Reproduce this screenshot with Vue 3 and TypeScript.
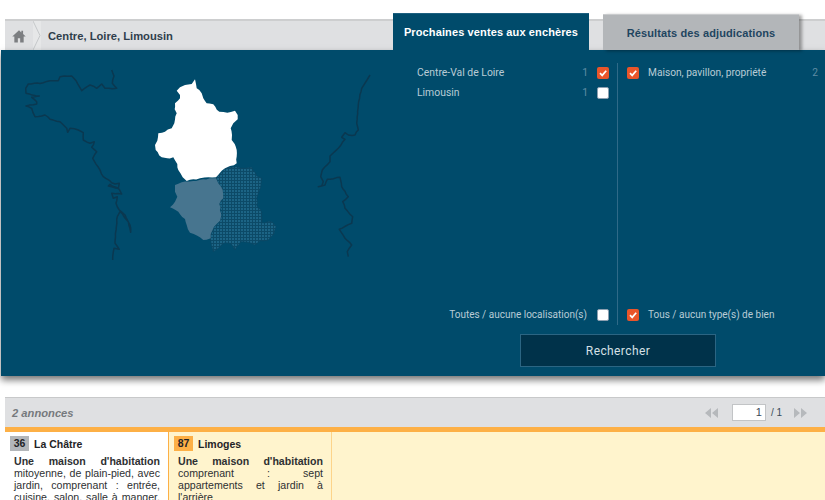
<script setup lang="ts">
const rough = (pts: number[][], amp: number): number[][] => {
  const out: number[][] = []
  let seed = 7
  const rnd = () => {
    seed = (seed * 9301 + 49297) % 233280
    return seed / 233280 - 0.5
  }
  pts.forEach((p, i) => {
    const n = pts[i + 1]
    out.push(p)
    if (!n) return
    const steps = Math.floor(Math.hypot(n[0] - p[0], n[1] - p[1]) / 9)
    for (let k = 1; k < steps; k++) {
      out.push([
        p[0] + ((n[0] - p[0]) * k) / steps + rnd() * amp,
        p[1] + ((n[1] - p[1]) * k) / steps + rnd() * amp,
      ])
    }
  })
  return out
}
const zoom = (pts: number[][], ox: number, oy: number, amp = 4): string =>
  rough(pts, amp).map((p, i) => `${i ? 'L' : 'M'}${(ox + p[0] / 3).toFixed(1)} ${(oy + p[1] / 3).toFixed(1)}`).join(' ')

const centre = zoom([[165,28],[168,42],[170,55],[178,60],[185,70],[190,85],[200,100],[220,103],[238,125],[262,128],[285,122],[293,135],[293,148],[280,160],[272,175],[276,195],[275,210],[284,222],[290,240],[290,280],[270,288],[255,295],[240,308],[228,322],[205,322],[180,325],[160,328],[140,333],[128,322],[115,300],[112,282],[100,262],[82,265],[65,262],[47,240],[45,225],[52,212],[55,190],[75,185],[95,175],[103,160],[110,130],[104,118],[105,100],[120,85],[120,75],[110,62],[120,52],[135,45],[155,42]], 140, 70) + ' Z'
const limousinLeft = zoom([[105,345],[125,337],[160,333],[190,328],[228,325],[235,340],[248,360],[250,385],[238,402],[243,430],[240,452],[222,470],[212,492],[212,505],[190,510],[172,497],[150,488],[140,465],[135,447],[115,425],[90,412],[105,395],[112,380],[105,365]], 140, 70) + ' Z'
const limousinRight = zoom([[228,322],[245,308],[255,295],[290,290],[315,295],[335,292],[350,318],[365,325],[362,350],[352,378],[350,405],[365,428],[365,458],[395,455],[408,470],[402,492],[385,510],[360,512],[345,525],[325,517],[302,515],[285,540],[272,520],[255,518],[220,545],[210,505],[222,470],[240,452],[243,430],[238,402],[250,385],[248,360],[235,340]], 140, 70) + ' Z'
const westCoast = zoom([[335,30],[342,48],[337,70],[350,85],[315,85],[305,72],[290,85],[270,75],[245,92],[228,62],[215,48],[180,50],[175,62],[150,62],[130,68],[85,72],[77,85],[78,100],[118,108],[95,112],[110,125],[110,132],[78,138],[95,145],[105,170],[125,168],[135,165],[150,178],[180,185],[200,205],[203,217],[210,205],[235,210],[250,218],[250,240],[270,250],[283,245],[275,262],[290,275],[278,295],[300,330],[310,350],[345,372],[358,370],[355,385],[325,378],[330,373],[358,388],[365,402],[335,400],[340,415],[352,410],[348,430],[358,450],[375,465],[390,495],[392,517],[385,485],[360,455],[352,470],[345,550],[358,568],[342,565],[338,600]], 0, 60, 3)
const eastCoast = 'M370 75 L367 80 ' + zoom([[215,25],[205,75],[200,130],[205,150],[195,165],[175,165],[165,158],[155,172],[165,178],[145,205],[120,228],[120,245],[97,270],[92,290],[100,305],[95,318],[85,320],[105,315],[112,298],[150,292],[155,320],[175,350],[158,365],[165,385],[188,410],[185,430],[148,448],[165,475],[185,495],[172,515],[175,530]], 290, 80, 3).replace('M', 'L')
</script>

<template>
  <div class="page">
    <div class="bar">
      <nav class="crumbs">
        <span class="home">
          <svg width="14" height="14" viewBox="0 0 24 24"><path d="M12 2 L0.5 13 H4 V23 H10 V16 H14 V23 H20 V13 H23.5 L19 8.7 V3 H16 V5.8 Z" /></svg>
        </span>
        <svg class="chev" width="8" height="29" viewBox="0 0 8 29"><path d="M0 0 L7 14.5 L0 29 Z" fill="#e6e7e8" /><path d="M0 0 L7 14.5 L0 29" fill="none" stroke="#c6c8ca" /></svg>
        <strong class="crumb-text">Centre, Loire, Limousin</strong>
      </nav>
      <div class="tab tab-on">Prochaines ventes aux enchères</div>
      <div class="tab tab-off">Résultats des adjudications</div>
    </div>

    <section class="panel">
      <svg class="map" width="401" height="326" viewBox="0 50 401 326">
        <defs>
          <pattern id="grid" width="3" height="3" patternUnits="userSpaceOnUse">
            <rect width="3" height="3" fill="#1c6485" />
            <path d="M0 0.5 H3 M0.5 0 V3" stroke="#0c4a67" stroke-width="1" />
          </pattern>
        </defs>
        <path :d="westCoast" class="coast" />
        <path :d="eastCoast" class="coast" />
        <path :d="limousinRight" fill="url(#grid)" stroke="#0b4561" stroke-width="0.6" />
        <path :d="limousinLeft" fill="#47758f" />
        <path :d="centre" fill="#fff" />
      </svg>

      <div class="side">
        <div class="cols">
          <div class="col col-left">
            <div class="rows">
              <label class="row">
                <span class="name">Centre-Val de Loire</span><span class="count">1</span>
                <span class="box on"><svg width="12" height="12" viewBox="0 0 12 12"><path d="M3 6.2 L5.2 8.4 L9.2 3.8" /></svg></span>
              </label>
              <label class="row">
                <span class="name">Limousin</span><span class="count">1</span>
                <span class="box"></span>
              </label>
            </div>
            <label class="row all all-left">
              <span>Toutes / aucune localisation(s)</span>
              <span class="box"></span>
            </label>
          </div>
          <div class="col col-right">
            <div class="rows">
              <label class="row">
                <span class="box on"><svg width="12" height="12" viewBox="0 0 12 12"><path d="M3 6.2 L5.2 8.4 L9.2 3.8" /></svg></span>
                <span class="name name-r">Maison, pavillon, propriété</span><span class="count">2</span>
              </label>
            </div>
            <label class="row all">
              <span class="box on"><svg width="12" height="12" viewBox="0 0 12 12"><path d="M3 6.2 L5.2 8.4 L9.2 3.8" /></svg></span>
              <span class="name-r">Tous / aucun type(s) de bien</span>
            </label>
          </div>
        </div>
        <button class="search">Rechercher</button>
      </div>
    </section>

    <section class="results">
      <div class="res-bar">
        <em class="total">2 annonces</em>
        <div class="pager">
          <svg width="13" height="10" viewBox="0 0 13 10"><path d="M6 0 V10 L0 5 Z M13 0 V10 L7 5 Z" /></svg>
          <span class="page-input">1</span>
          <span class="page-of">/ 1</span>
          <svg width="13" height="10" viewBox="0 0 13 10"><path d="M0 0 V10 L6 5 Z M7 0 V10 L13 5 Z" /></svg>
        </div>
      </div>
      <div class="cards">
        <article class="card card-white">
          <h3><span class="dep">36</span>La Châtre</h3>
          <p><b>Une maison d'habitation</b> mitoyenne, de plain-pied, avec jardin, comprenant : entrée, cuisine, salon, salle à manger, deux chambres, salle de bains et dépendances</p>
        </article>
        <article class="card card-yellow">
          <h3><span class="dep dep-o">87</span>Limoges</h3>
          <p><b>Une maison d'habitation</b> comprenant : sept appartements et jardin à l'arrière</p>
        </article>
      </div>
    </section>
  </div>
</template>

<style scoped>
.page {
  width: 825px;
  height: 500px;
  overflow: hidden;
  box-sizing: border-box;
  padding-top: 19px;
  background: #fff;
  font-family: "Liberation Sans", Arial, sans-serif;
}
.bar {
  display: flex;
  height: 31px;
  box-sizing: border-box;
  margin-left: 5px;
  background: #dfe0e2;
  border-top: 2px solid #cdcecf;
}
.crumbs {
  display: flex;
  align-items: center;
  width: 388px;
  height: 29px;
}
.home {
  display: flex;
  width: 28px;
  padding-left: 7px;
  box-sizing: border-box;
}
.home svg { fill: #7c7e81; }
.chev { background: #e6e7e8; }
.crumb-text {
  margin-left: 7px;
  font-size: 11.2px;
  color: #2f3e4c;
}
.tab {
  position: relative;
  z-index: 2;
  display: flex;
  align-items: center;
  justify-content: center;
  width: 196px;
  height: 36px;
  margin-top: -7px;
  box-sizing: border-box;
  font-size: 11px;
  font-weight: 700;
  letter-spacing: 0.12px;
}
.tab-on {
  background: #004b6b;
  color: #fff;
  box-shadow: 0 -1px 0 #1d6080;
}
.tab-off {
  margin-left: 14px;
  background: #b3b6b9;
  color: #1f4560;
  border-top: 1px solid #c9cbcd;
  box-shadow: 3px 1px 3px rgba(0, 0, 0, 0.35);
}
.panel {
  position: relative;
  z-index: 1;
  display: flex;
  height: 326px;
  margin-left: 1px;
  background: #004b6b;
  box-shadow: 0 4px 7px rgba(0, 0, 0, 0.55);
}
.map { flex: none; margin-left: -1px; }
.coast {
  fill: none;
  stroke: #0a3850;
  stroke-width: 1.5;
  stroke-linejoin: round;
}
.side {
  display: flex;
  flex-direction: column;
  flex: 1;
  padding-top: 13px;
}
.cols {
  display: flex;
  height: 262px;
}
.col {
  display: flex;
  flex-direction: column;
  justify-content: space-between;
  box-sizing: border-box;
}
.col-left {
  width: 217px;
  padding-left: 16px;
  padding-right: 8px;
  border-right: 1px solid #2f6a88;
}
.col-right {
  flex: 1;
  padding-left: 9px;
  padding-right: 7px;
}
.rows {
  display: flex;
  flex-direction: column;
  gap: 8px;
  padding-top: 4px;
}
.row {
  display: flex;
  align-items: center;
  height: 12px;
  font-family: Roboto, sans-serif;
  font-size: 10.2px;
  color: #b9cbd6;
}
.col-left .rows .row { font-size: 10.4px; }
.name { flex: 1; position: relative; top: -1px; }
.name-r { margin-left: 9px; position: relative; top: -1px; }
.count {
  margin-right: 9px;
  color: #5f8ba3;
  position: relative;
  top: -1px;
}
.col-right .count { margin-right: 0; }
.all { margin-bottom: 4px; font-size: 10px; }
.all-left { justify-content: flex-end; gap: 10px; }
.all-left span:first-child { position: relative; top: -1px; }
.box {
  flex: none;
  display: block;
  width: 12px;
  height: 12px;
  box-sizing: border-box;
  border-radius: 2px;
  background: #fff;
  border: 1px solid #8c9fb0;
}
.box.on {
  background: #e9552a;
  border: none;
}
.box svg { display: block; fill: none; stroke: #fff; stroke-width: 1.7; }
.search {
  align-self: flex-start;
  width: 196px;
  height: 33px;
  margin: 9px 0 0 119px;
  background: #00324a;
  border: 1px solid #2b6583;
  color: #d5e0e6;
  font-family: Roboto, sans-serif;
  font-size: 12px;
  letter-spacing: 0.4px;
  padding: 0;
}
.results { margin: 21px 0 0 5px; }
.res-bar {
  display: flex;
  align-items: center;
  justify-content: space-between;
  height: 35px;
  box-sizing: border-box;
  padding: 0 18px 0 7px;
  background: #dfe0e2;
  border-top: 1px solid #c8c9ca;
  border-bottom: 5px solid #fdb046;
}
.total {
  font-size: 11.2px;
  font-weight: 700;
  color: #76797d;
}
.pager {
  display: flex;
  align-items: center;
  font-size: 10px;
  color: #3a4a58;
}
.pager svg { fill: #b6b9bc; }
.page-input {
  width: 34px;
  height: 17px;
  margin-left: 14px;
  box-sizing: border-box;
  padding-right: 3px;
  font-size: 11px;
  line-height: 15px;
  text-align: right;
  background: #fff;
  border: 1px solid #c2c4c6;
}
.page-of { margin: 0 12px 0 5px; }
.cards {
  display: flex;
  height: 80px;
  background: #fff4cd;
}
.card {
  width: 164px;
  box-sizing: border-box;
  padding: 4px 8px 0 5px;
  color: #2e3032;
}
.card-white {
  background: #fff;
  border-right: 1px solid #fdb046;
}
.card-yellow {
  width: 163px;
  background: #fff4cd;
  border-right: 1px solid #fdd48a;
}
h3 {
  display: flex;
  align-items: center;
  margin: 0;
  font-size: 10.5px;
  font-weight: 700;
  height: 15px;
  color: #1f2326;
}
.dep {
  display: inline-block;
  width: 19px;
  height: 15px;
  margin-right: 5px;
  line-height: 15px;
  text-align: center;
  background: #b3b6b9;
}
.dep-o { background: #fdb046; }
p {
  margin: 4px 0 0 4px;
  font-size: 10.6px;
  line-height: 12px;
  text-align: justify;
}
b { font-weight: 700; }
</style>
